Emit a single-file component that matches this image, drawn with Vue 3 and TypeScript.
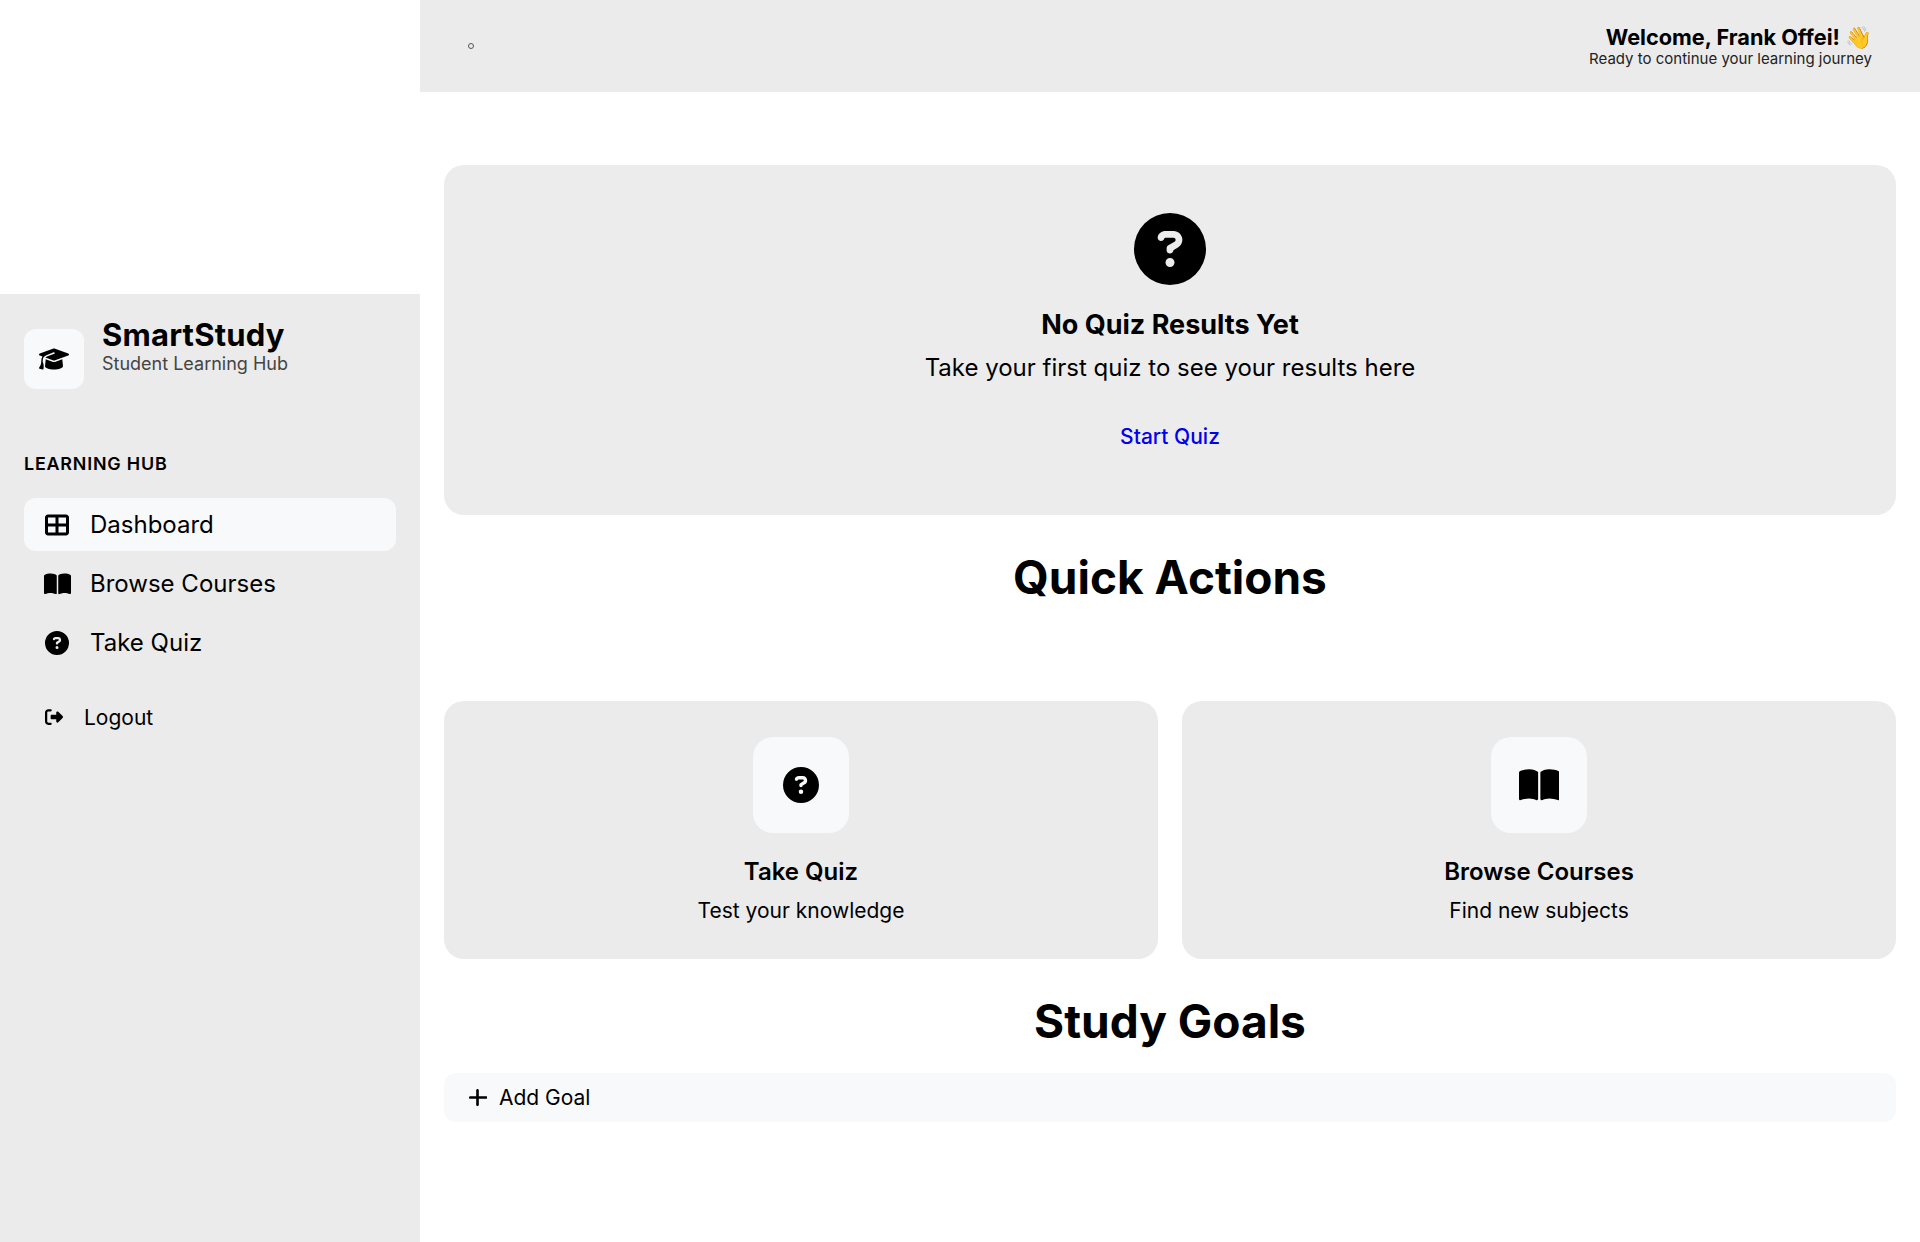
<template>
  <div class="layout">
    <aside class="sidebar">
      <div class="brand">
        <div class="brand-icon">
          <svg class="icon" viewBox="0 0 640 512" width="30" height="24"><path :d="icons.cap" /></svg>
        </div>
        <div class="brand-text">
          <div class="brand-name">SmartStudy</div>
          <div class="brand-sub">Student Learning Hub</div>
        </div>
      </div>

      <div class="nav-label">LEARNING HUB</div>
      <nav class="nav">
        <a v-for="item in navItems" :key="item.label" class="nav-item" :class="{ active: item.active }">
          <span class="nav-icon">
            <svg class="icon" :viewBox="item.box" :height="item.size"><path :d="item.path" /></svg>
          </span>
          <span>{{ item.label }}</span>
        </a>
      </nav>

      <a class="logout">
        <svg class="icon" viewBox="0 0 512 512" width="18" height="18"><path :d="icons.logout" /></svg>
        <span>Logout</span>
      </a>
    </aside>

    <div class="content">
      <header class="topbar">
        <span class="marker"></span>
        <div class="welcome">
          <div class="welcome-title">Welcome, Frank Offei! 👋</div>
          <div class="welcome-sub">Ready to continue your learning journey</div>
        </div>
      </header>

      <main class="main">
        <section class="empty-card">
          <svg class="icon" viewBox="0 0 512 512" width="72" height="72"><path :d="icons.question" /></svg>
          <h3 class="empty-title">No Quiz Results Yet</h3>
          <p class="empty-text">Take your first quiz to see your results here</p>
          <a class="start-link" href="#">Start Quiz</a>
        </section>

        <h2 class="section-title quick">Quick Actions</h2>

        <div class="actions">
          <div v-for="action in actions" :key="action.title" class="action-card">
            <div class="action-icon">
              <svg class="icon" :viewBox="action.box" height="36"><path :d="action.path" /></svg>
            </div>
            <div class="action-title">{{ action.title }}</div>
            <div class="action-text">{{ action.text }}</div>
          </div>
        </div>

        <h2 class="section-title goals">Study Goals</h2>

        <button class="add-goal">
          <svg class="icon" viewBox="0 0 448 512" width="19" height="21"><path :d="icons.plus" /></svg>
          <span>Add Goal</span>
        </button>
      </main>
    </div>
  </div>
</template>

<script setup lang="ts">
const icons = {
  cap: "M320 32c-8.1 0-16.1 1.4-23.7 4.1L15.8 137.4C6.3 140.9 0 149.9 0 160s6.3 19.1 15.8 22.6l57.9 20.9C57.3 229.3 48 259.8 48 291.9v28.1c0 28.4-10.8 57.7-22.3 80.8c-6.5 13-13.9 25.8-22.5 37.6C0 442.7-.9 448.3 .9 453.4s6 8.9 11.2 10.2l64 16c4.2 1.1 8.7 .3 12.4-2s6.3-6.1 7.1-10.4c8.6-42.8 4.3-81.2-2.1-108.7C90.3 344.3 86 329.8 80 316.5V291.9c0-30.2 10.2-58.7 27.9-81.5c12.9-15.5 29.6-28 49.2-35.7l157-61.7c8.2-3.2 17.5 .8 20.7 9s-.8 17.5-9 20.7l-157 61.7c-12.4 4.9-23.3 12.4-32.2 21.6l159.6 57.6c7.6 2.7 15.6 4.1 23.7 4.1s16.1-1.4 23.7-4.1L624.2 182.6c9.5-3.4 15.8-12.5 15.8-22.6s-6.3-19.1-15.8-22.6L343.7 36.1C336.1 33.4 328.1 32 320 32zM128 408c0 35.3 86 72 192 72s192-36.7 192-72L496.7 262.6 354.5 314c-11.1 4-22.8 6-34.5 6s-23.5-2-34.5-6L143.3 262.6 128 408z",
  book: "M249.6 471.5c10.8 3.8 22.4-4.1 22.4-15.5V78.6c0-4.2-1.6-8.4-5-11C247.4 52 202.4 32 144 32C93.5 32 46.3 45.3 18.1 56.1C6.8 60.5 0 71.7 0 83.8V454.1c0 11.9 12.8 20.2 24.1 16.5C55.6 460.1 105.5 448 144 448c33.9 0 79 14 105.6 23.5zm76.8 0C353 462 398.1 448 432 448c38.5 0 88.4 12.1 119.9 22.6c11.3 3.8 24.1-4.6 24.1-16.5V83.8c0-12.1-6.8-23.3-18.1-27.6C529.7 45.3 482.5 32 432 32c-58.4 0-103.4 20-123 35.6c-3.3 2.6-5 6.8-5 11V456c0 11.4 11.7 19.3 22.4 15.5z",
  question: "M256 512A256 256 0 1 0 256 0a256 256 0 1 0 0 512zM169.8 165.3c7.9-22.3 29.1-37.3 52.8-37.3h58.3c34.9 0 63.1 28.3 63.1 63.1c0 22.6-12.1 43.5-31.7 54.8L280 264.4c-.2 13-10.9 23.6-24 23.6c-13.3 0-24-10.7-24-24V250.5c0-8.6 4.6-16.5 12.1-20.8l44.3-25.4c4.7-2.7 7.6-7.7 7.6-13.1c0-8.4-6.8-15.1-15.1-15.1H222.6c-3.4 0-6.4 2.1-7.5 5.3l-.4 1.2c-4.4 12.5-18.2 19-30.6 14.6s-19-18.2-14.6-30.6l.4-1.2zM224 352a32 32 0 1 1 64 0 32 32 0 1 1 -64 0z",
  grid: "M448 96V224H288V96H448zm0 192V416H288V288H448zM224 224H64V96H224V224zM64 288H224V416H64V288zM64 32C28.7 32 0 60.7 0 96V416c0 35.3 28.7 64 64 64H448c35.3 0 64-28.7 64-64V96c0-35.3-28.7-64-64-64H64z",
  logout: "M377.9 105.9L500.7 228.7c7.2 7.2 11.3 17.1 11.3 27.3s-4.1 20.1-11.3 27.3L377.9 406.1c-6.4 6.4-15 9.9-24 9.9c-18.7 0-33.9-15.2-33.9-33.9l0-62.1-128 0c-17.7 0-32-14.3-32-32l0-64c0-17.7 14.3-32 32-32l128 0 0-62.1c0-18.7 15.2-33.9 33.9-33.9c9 0 17.6 3.6 24 9.9zM160 96L96 96c-17.7 0-32 14.3-32 32l0 256c0 17.7 14.3 32 32 32l64 0c17.7 0 32 14.3 32 32s-14.3 32-32 32l-64 0c-53 0-96-43-96-96L0 128C0 75 43 32 96 32l64 0c17.7 0 32 14.3 32 32s-14.3 32-32 32z",
  plus: "M256 80c0-17.7-14.3-32-32-32s-32 14.3-32 32V224H48c-17.7 0-32 14.3-32 32s14.3 32 32 32H192V432c0 17.7 14.3 32 32 32s32-14.3 32-32V288H432c17.7 0 32-14.3 32-32s-14.3-32-32-32H256V80z",
};

const navItems = [
  { label: "Dashboard", path: icons.grid, box: "0 0 512 512", size: 24, active: true },
  { label: "Browse Courses", path: icons.book, box: "0 0 576 512", size: 24, active: false },
  { label: "Take Quiz", path: icons.question, box: "0 0 512 512", size: 24, active: false },
];

const actions = [
  { title: "Take Quiz", text: "Test your knowledge", path: icons.question, box: "0 0 512 512" },
  { title: "Browse Courses", text: "Find new subjects", path: icons.book, box: "0 0 576 512" },
];
</script>

<style>
html,
body {
  background: #fff;
}
</style>

<style scoped>
.layout {
  display: flex;
  min-height: 1242px;
  font-family: Inter, "Liberation Sans", sans-serif;
  color: #000;
}

.icon {
  display: block;
  fill: currentColor;
}

.sidebar {
  width: 420px;
  flex-shrink: 0;
  margin-top: 294px;
  padding: 18px 24px 24px;
  box-sizing: border-box;
  background: #ebebeb;
}

.brand {
  display: flex;
  align-items: center;
  gap: 18px;
  height: 72px;
}

.brand-icon {
  width: 60px;
  height: 60px;
  margin-top: 22px;
  border-radius: 12px;
  background: #f8f9fa;
  display: flex;
  align-items: center;
  justify-content: center;
}

.brand-text {
  margin-bottom: 4px;
}

.brand-name {
  font-size: 31px;
  font-weight: 700;
  line-height: 36px;
  letter-spacing: 0.2px;
}

.brand-sub {
  font-size: 18px;
  line-height: 22px;
  color: #444;
}

.nav-label {
  margin-top: 68px;
  font-size: 17.9px;
  font-weight: 600;
  line-height: 24px;
  letter-spacing: 0.8px;
}

.nav {
  margin-top: 22px;
  display: flex;
  flex-direction: column;
  gap: 6px;
}

.nav-item {
  display: flex;
  align-items: center;
  gap: 18px;
  height: 53px;
  padding: 0 18px;
  border-radius: 12px;
  font-size: 24px;
}

.nav-item.active {
  background: #f8f9fa;
}

.nav-icon {
  width: 30px;
  display: flex;
  justify-content: center;
}

.logout {
  display: flex;
  align-items: center;
  gap: 21px;
  margin-top: 26px;
  padding: 0 21px;
  height: 44px;
  font-size: 21px;
}

.content {
  flex: 1;
  min-width: 0;
}

.topbar {
  height: 92px;
  background: #ebebeb;
  display: flex;
  align-items: center;
  justify-content: space-between;
  padding: 0 48px;
  box-sizing: border-box;
}

.marker {
  width: 6px;
  height: 6px;
  box-sizing: border-box;
  border: 1px solid #555;
  border-radius: 50%;
}

.welcome {
  text-align: right;
}

.welcome-title {
  font-size: 21.7px;
  font-weight: 700;
  line-height: 26px;
}

.welcome-sub {
  font-size: 15px;
  line-height: 18px;
  color: #222;
}

.main {
  padding: 73px 24px 0;
}

.empty-card {
  height: 350px;
  padding-top: 48px;
  box-sizing: border-box;
  border-radius: 20px;
  background: #ececec;
  display: flex;
  flex-direction: column;
  align-items: center;
}

.empty-title {
  margin: 22px 0 0;
  font-size: 27px;
  font-weight: 700;
  line-height: 36px;
}

.empty-text {
  margin: 8px 0 0;
  font-size: 24px;
  line-height: 34px;
}

.start-link {
  margin-top: 37px;
  font-size: 21px;
  font-weight: 500;
  line-height: 30px;
  color: #0000ee;
  text-decoration: none;
}

.section-title {
  margin: 0;
  text-align: center;
  font-weight: 700;
  font-size: 46px;
  line-height: 58px;
}

.section-title.quick {
  margin-top: 33px;
}

.actions {
  margin-top: 95px;
  display: grid;
  grid-template-columns: 1fr 1fr;
  gap: 24px;
}

.action-card {
  height: 258px;
  padding-top: 36px;
  box-sizing: border-box;
  border-radius: 20px;
  background: #ebebeb;
  display: flex;
  flex-direction: column;
  align-items: center;
}

.action-icon {
  width: 96px;
  height: 96px;
  border-radius: 20px;
  background: #f8f9fa;
  display: flex;
  align-items: center;
  justify-content: center;
}

.action-title {
  margin-top: 18px;
  font-size: 24px;
  font-weight: 600;
  line-height: 42px;
}

.action-text {
  margin-top: 0;
  font-size: 21px;
  line-height: 36px;
}

.section-title.goals {
  margin-top: 33px;
}

.add-goal {
  width: 100%;
  height: 49px;
  margin-top: 23px;
  padding: 0 24px;
  border: none;
  border-radius: 12px;
  background: #f8f9fa;
  color: #000;
  display: flex;
  align-items: center;
  gap: 12px;
  font-family: inherit;
  font-size: 21px;
}
</style>
